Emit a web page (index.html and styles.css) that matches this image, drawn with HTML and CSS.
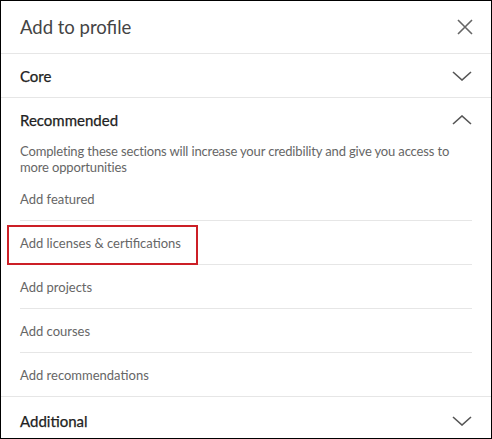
FILE: index.html
```html
<!DOCTYPE html>
<html>
<head>
<meta charset="utf-8">
<link rel="stylesheet" href="styles.css">
</head>
<body>
<div class="modal">
  <div class="header">
    <h2 class="title">Add to profile</h2>
    <svg class="close" width="16" height="16" viewBox="0 0 16 16"><path d="M1 1 L15 15 M15 1 L1 15" stroke="#666" stroke-width="1.6" fill="none"/></svg>
  </div>
  <div class="section">
    <div class="sec-head">
      <span class="sec-title">Core</span>
      <svg class="chev" width="20" height="10" viewBox="0 0 20 10"><path d="M1 1 L10 9 L19 1" stroke="#555" stroke-width="1.6" fill="none"/></svg>
    </div>
  </div>
  <div class="section">
    <div class="sec-head">
      <span class="sec-title">Recommended</span>
      <svg class="chev" width="20" height="10" viewBox="0 0 20 10"><path d="M1 9 L10 1 L19 9" stroke="#555" stroke-width="1.6" fill="none"/></svg>
    </div>
    <p class="desc">Completing these sections will increase your credibility and give you access to more opportunities</p>
    <ul class="items">
      <li class="item">Add featured</li>
      <li class="item highlighted"><span class="hl-box">Add licenses &amp; certifications</span></li>
      <li class="item">Add projects</li>
      <li class="item">Add courses</li>
      <li class="item">Add recommendations</li>
    </ul>
  </div>
  <div class="section last">
    <div class="sec-head">
      <span class="sec-title">Additional</span>
      <svg class="chev" width="20" height="10" viewBox="0 0 20 10"><path d="M1 1 L10 9 L19 1" stroke="#555" stroke-width="1.6" fill="none"/></svg>
    </div>
  </div>
</div>
</body>
</html>
```
FILE: styles.css
```css
html, body {
  margin: 0;
  padding: 0;
  background: #fff;
}
body {
  font-family: "Lato", "Open Sans", sans-serif;
}
.modal {
  box-sizing: border-box;
  width: 492px;
  height: 439px;
  border: 1px solid #000;
  overflow: hidden;
  background: #fff;
}
.header {
  height: 52px;
  display: flex;
  align-items: center;
  justify-content: space-between;
  padding: 0 18px 0 19px;
  border-bottom: 1px solid #e6e6e6;
}
.title {
  margin: 0;
  font-size: 18.5px;
  font-weight: 400;
  color: #444;
}
.close {
  display: block;
}
.section {
  border-bottom: 1px solid #e6e6e6;
}
.section.last {
  border-bottom: none;
}
.sec-head {
  height: 43px;
  display: flex;
  align-items: center;
  justify-content: space-between;
  padding: 0 19px 0 19px;
}
.section.last .sec-head {
  padding-top: 2px;
}
.sec-title {
  font-size: 15px;
  font-weight: 400;
  color: #222;
  -webkit-text-stroke: 0.25px #222;
}
.chev {
  display: block;
}
.desc {
  margin: 0;
  padding: 2px 19px 2px 19px;
  font-size: 13px;
  letter-spacing: -0.15px;
  line-height: 16px;
  color: #666;
}
.items {
  list-style: none;
  margin: 0;
  padding: 0 0 0 19px;
}
.item {
  height: 43px;
  display: flex;
  align-items: center;
  margin-right: 19px;
  border-bottom: 1px solid #e6e6e6;
  font-size: 13px;
  color: #666;
}
.item:last-child {
  border-bottom: none;
  margin-right: 0;
}
.hl-box {
  position: relative;
}
.hl-box::before {
  content: "";
  position: absolute;
  left: -13px;
  top: -10px;
  width: 191px;
  height: 40px;
  box-sizing: border-box;
  border: 2px solid #cc1f26;
}
```
